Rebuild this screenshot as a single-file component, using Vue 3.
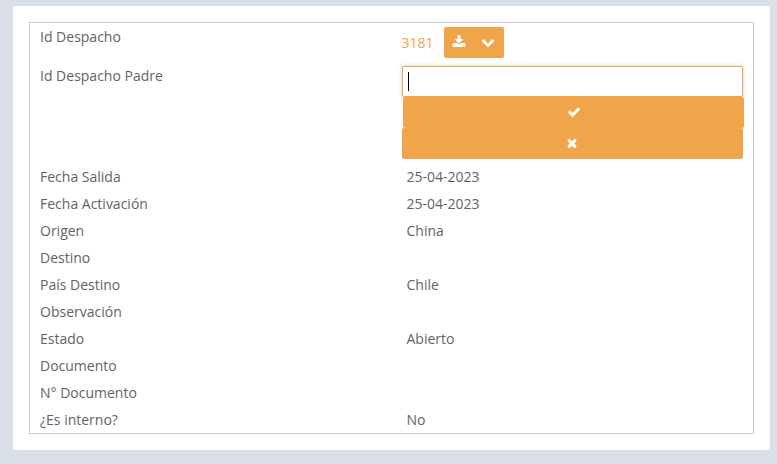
<script setup>
const rows = [
  { label: 'Fecha Salida', value: '25-04-2023' },
  { label: 'Fecha Activación', value: '25-04-2023' },
  { label: 'Origen', value: 'China' },
  { label: 'Destino', value: '' },
  { label: 'País Destino', value: 'Chile' },
  { label: 'Observación', value: '' },
  { label: 'Estado', value: 'Abierto' },
  { label: 'Documento', value: '' },
  { label: 'N° Documento', value: '' },
  { label: '¿Es interno?', value: 'No' },
]
</script>

<template>
  <main class="page">
    <section class="card">
      <div class="details">
        <div class="row row-id">
          <div class="label">Id Despacho</div>
          <div class="control id-control">
            <a class="id-link">3181</a>
            <button class="dropdown" type="button">
              <svg class="icon" viewBox="0 0 1792 1792"><path d="M1344 1344q0-26-19-45t-45-19-45 19-19 45 19 45 45 19 45-19 19-45zm256 0q0-26-19-45t-45-19-45 19-19 45 19 45 45 19 45-19 19-45zm128-224v320q0 40-28 68t-68 28h-1472q-40 0-68-28t-28-68v-320q0-40 28-68t68-28h465l135 136q58 56 136 56t136-56l136-136h464q40 0 68 28t28 68zm-325-569q17 41-14 70l-448 448q-18 19-45 19t-45-19l-448-448q-31-29-14-70 17-39 59-39h256v-448q0-26 19-45t45-19h256q26 0 45 19t19 45v448h256q42 0 59 39z" /></svg>
              <svg class="icon" viewBox="0 0 1792 1792"><path d="M1683 808l-742 741q-19 19-45 19t-45-19l-742-741q-19-19-19-45.500t19-45.500l166-165q19-19 45-19t45 19l531 531 531-531q19-19 45-19t45 19l166 165q19 19 19 45.500t-19 45.500z" /></svg>
            </button>
          </div>
        </div>
        <div class="row row-parent">
          <div class="label">Id Despacho Padre</div>
          <div class="control editor">
            <div class="input"><span class="caret"></span></div>
            <button class="action accept" type="button">
              <svg class="icon" viewBox="0 0 1792 1792"><path d="M1671 566q0 40-28 68l-724 724-136 136q-28 28-68 28t-68-28l-136-136-362-362q-28-28-28-68t28-68l136-136q28-28 68-28t68 28l294 295 656-657q28-28 68-28t68 28l136 136q28 28 28 68z" /></svg>
            </button>
            <button class="action cancel" type="button">
              <svg class="icon" viewBox="0 0 1792 1792"><path d="M1490 1322q0 40-28 68l-136 136q-28 28-68 28t-68-28l-294-294-294 294q-28 28-68 28t-68-28l-136-136q-28-28-28-68t28-68l294-294-294-294q-28-28-28-68t28-68l136-136q28-28 68-28t68 28l294 294 294-294q28-28 68-28t68 28l136 136q28 28 28 68t-28 68l-294 294 294 294q28 28 28 68z" /></svg>
            </button>
          </div>
        </div>
        <div v-for="row in rows" :key="row.label" class="row">
          <div class="label">{{ row.label }}</div>
          <div class="value">{{ row.value }}</div>
        </div>
      </div>
    </section>
  </main>
</template>

<style>
body {
  background: #d9e0e7;
}
</style>

<style scoped>
.page {
  box-sizing: border-box;
  height: 464px;
  padding: 6px 7px 14px 13px;
  background: #d9e0e7;
  color: #5f6368;
  font: 14px/20px "Open Sans", sans-serif;
}
.card {
  box-sizing: border-box;
  height: 444px;
  padding: 16px;
  border-radius: 2px;
  background: #fff;
}
.details {
  box-sizing: border-box;
  height: 412px;
  border: 1px solid #c8cacd;
}
.row {
  display: grid;
  grid-template-columns: 362px 1fr;
  height: 27px;
}
.row-id {
  height: 39px;
}
.row-parent {
  height: 101px;
}
.label {
  padding: 4px 0 0 10px;
}
.value {
  padding: 4px 0 0 14.5px;
}
.control {
  padding: 4px 10px 0;
}
.id-control {
  display: flex;
  align-items: flex-start;
  padding-left: 9.5px;
}
.id-link {
  width: 42.5px;
  padding-top: 6px;
  color: #f0a54b;
}
button {
  display: flex;
  align-items: center;
  justify-content: center;
  box-sizing: border-box;
  height: 31px;
  margin: 0;
  padding: 0 0 2px;
  border: 0;
  border-radius: 2px;
  background: #f0a54b;
}
.dropdown {
  width: 60px;
  padding-right: 1px;
  gap: 15px;
}
.icon {
  display: block;
  width: 14px;
  height: 14px;
  overflow: visible;
  fill: #fff;
}
.editor {
  display: flex;
  flex-direction: column;
}
.input {
  box-sizing: border-box;
  height: 31px;
  padding: 5px;
  border: 1px solid #f0a54b;
  border-radius: 2px;
  background: #fff;
  box-shadow: 0 0 4px rgba(0, 0, 0, 0.2);
}
.caret {
  display: block;
  width: 1px;
  height: 19px;
  background: #000;
}
.action {
  width: 100%;
}
.accept {
  position: relative;
  left: 1px;
}
.cancel {
  padding-right: 1px;
}
</style>
